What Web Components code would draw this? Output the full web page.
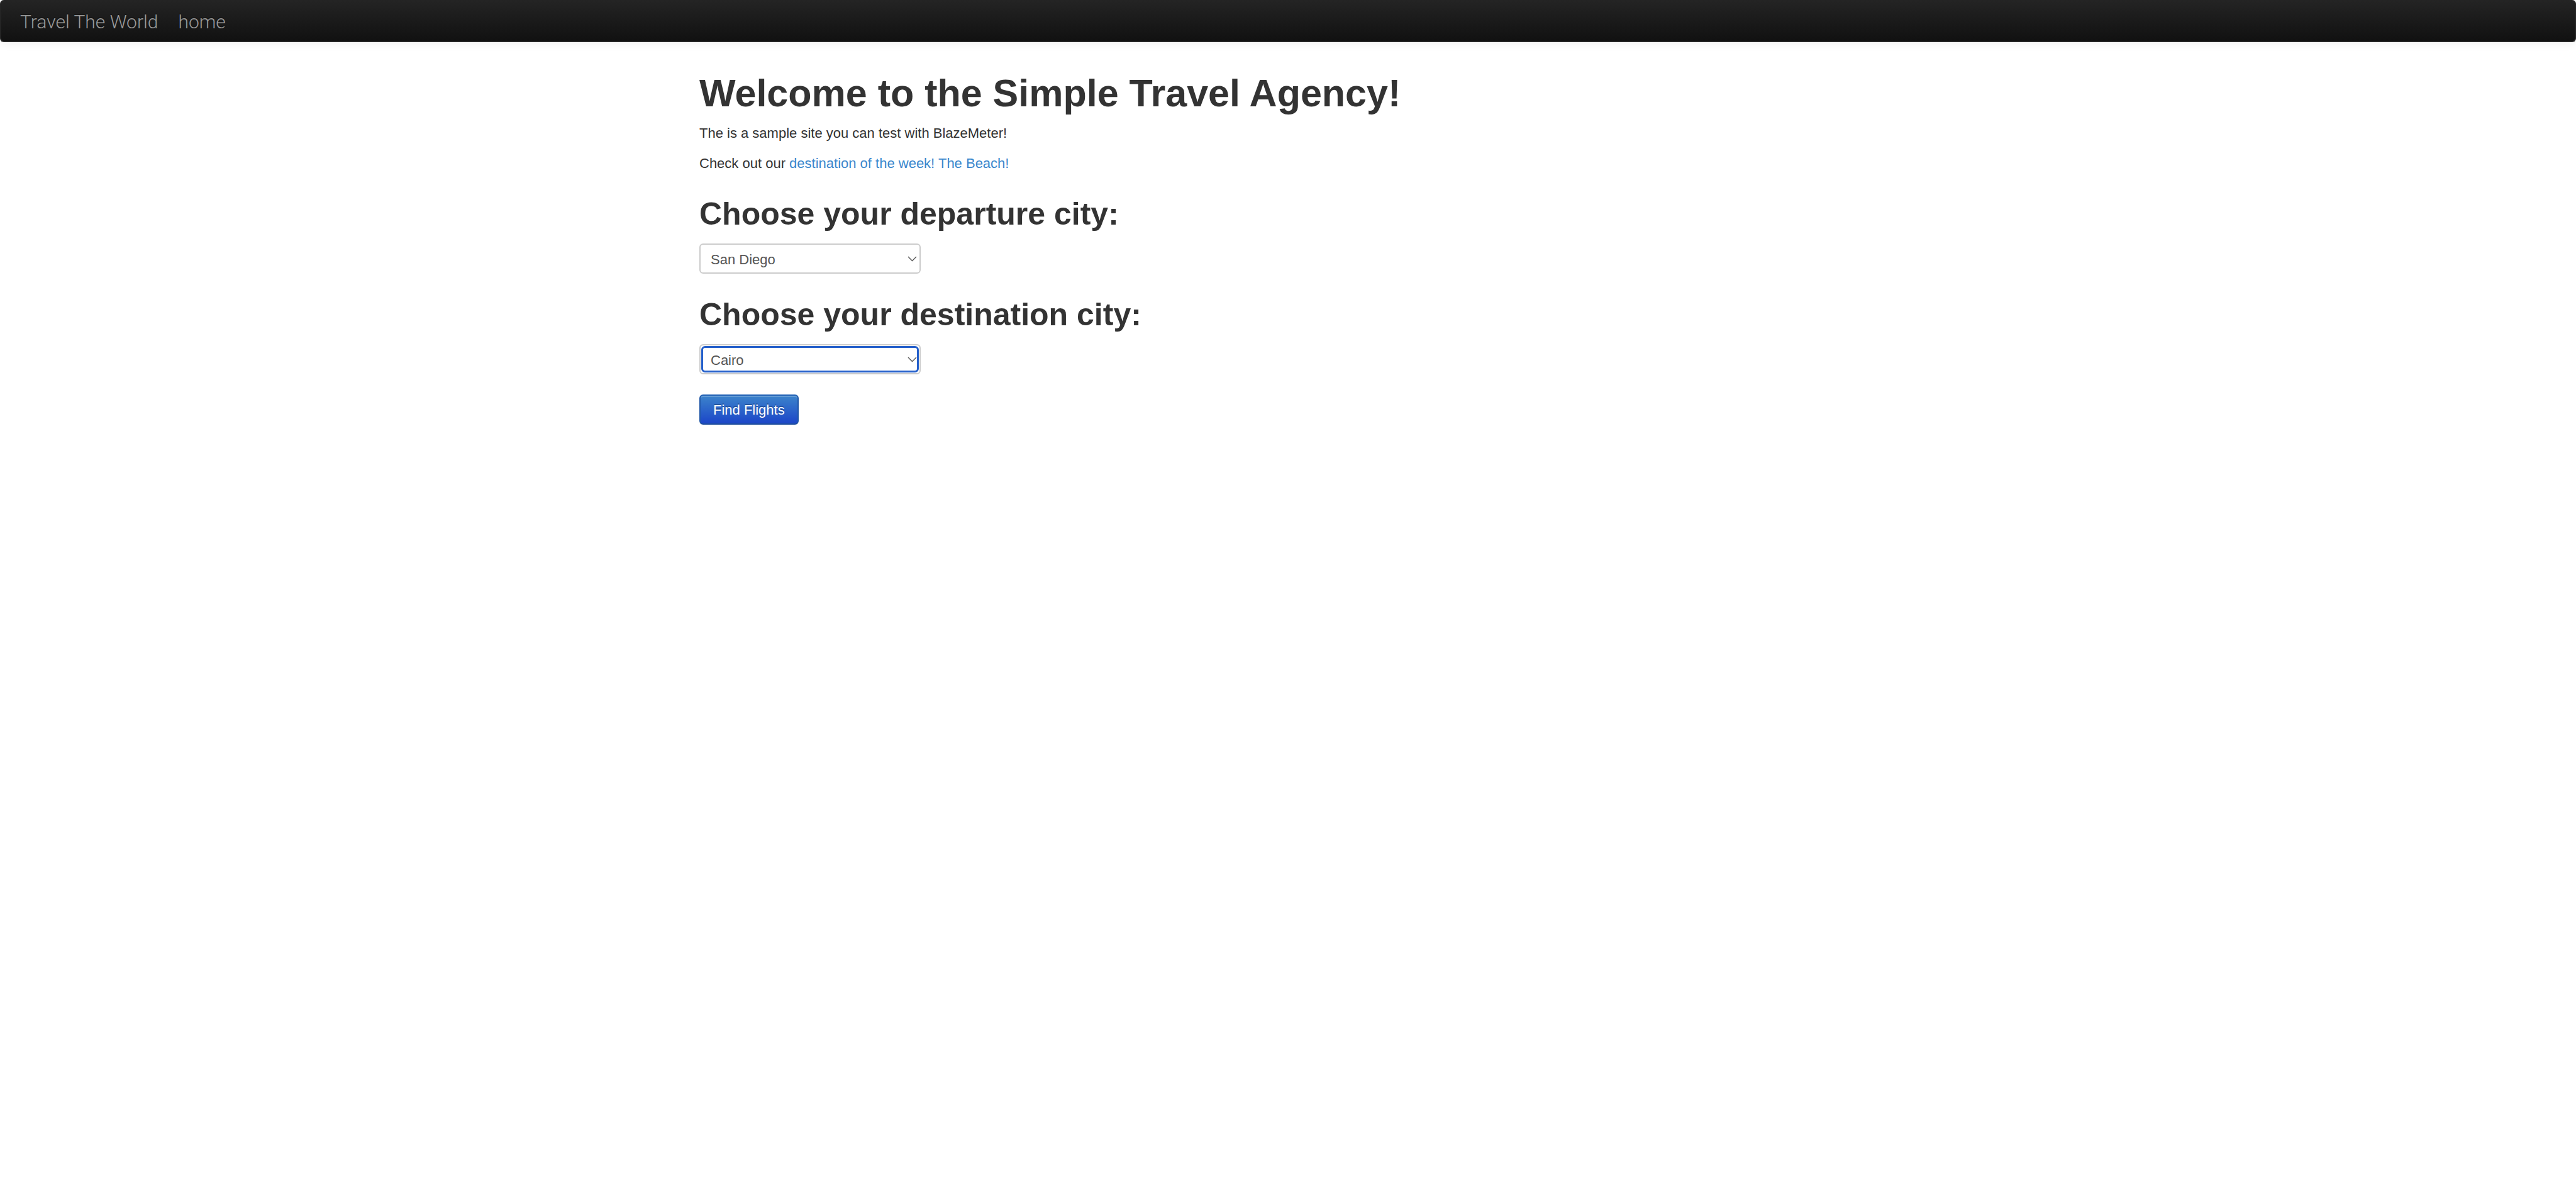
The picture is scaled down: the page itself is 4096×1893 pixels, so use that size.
<!DOCTYPE html>
<html lang="en">
<head>
<meta charset="utf-8">
<title>Travel The World</title>
<style>
  body { margin: 0; background: #fff; color: #333; font: 22px/32px "Liberation Sans", Arial, sans-serif; }
</style>
</head>
<body>
<travel-navbar>
  <nav-link href="#">Travel The World</nav-link>
  <nav-link href="#">home</nav-link>
</travel-navbar>
<travel-page></travel-page>

<template id="navbar-template">
  <style>
    :host { display: block; }
    nav {
      display: flex; box-sizing: border-box; height: 67px; padding: 0 14px;
      border: 2px solid #252525; border-top-width: 0; border-radius: 6px;
      background: linear-gradient(#242424, #111);
      box-shadow: 0 2px 16px rgba(0, 0, 0, .065);
    }
  </style>
  <nav aria-label="Main"><slot></slot></nav>
</template>

<template id="nav-link-template">
  <style>
    :host { display: flex; }
    a {
      display: flex; align-items: center; padding: 4px 16px 0; color: #999; text-decoration: none;
      font: 300 30px/32px Roboto, "Liberation Sans", sans-serif;
      text-shadow: 0 -2px 0 rgba(0, 0, 0, .25);
    }
  </style>
  <a><slot></slot></a>
</template>

<template id="city-select-template">
  <style>
    :host { display: block; }
    h2 { margin: 0 0 14px; font-size: 50px; line-height: 66px; }
    .field { display: grid; width: 352px; align-items: center; }
    select, svg, .ring { grid-area: 1 / 1; }
    select {
      appearance: none; box-sizing: border-box; width: 100%; height: 48px; margin: 0; padding: 4px 32px 0 16px;
      border: 2px solid #ccc; border-radius: 6px; background: #fff; color: #555; font: inherit; outline: none;
    }
    .ring { display: none; align-self: stretch; margin: 3px; border: 3px solid #2560cb; border-radius: 6px; pointer-events: none; }
    :host([active]) .ring { display: block; }
    svg { justify-self: end; width: 15px; height: 9px; margin-right: 6px; pointer-events: none; }
  </style>
  <h2><label for="city"><slot name="label"></slot></label></h2>
  <div class="field">
    <select id="city"></select>
    <div class="ring"></div>
    <svg viewBox="0 0 15 9" fill="none" stroke="#555" stroke-width="1.4"><path d="M1 1l6.5 6.5L14 1"/></svg>
  </div>
</template>

<template id="primary-button-template">
  <style>
    :host { display: block; }
    button {
      box-sizing: border-box; height: 48px; margin: 0; padding: 2px 20px 0; border: 2px solid;
      border-color: #2262b4 #2158a8 #1f4f9c; border-radius: 6px; color: #fff; font: inherit;
      background: linear-gradient(#3d86cb, #1a43c8) border-box;
      text-shadow: 0 -2px 0 rgba(0, 0, 0, .25);
      box-shadow: inset 0 2px 0 rgba(255, 255, 255, .2), 0 2px 3px rgba(0, 0, 0, .05);
    }
  </style>
  <button type="submit"><slot></slot></button>
</template>

<template id="page-template">
  <style>
    :host { display: block; }
    main { box-sizing: border-box; width: 100%; max-width: 1872px; margin: 0 auto; padding-top: 48px; }
    h1 { margin: 0 0 15px; font-size: 61px; line-height: 66px; }
    p { margin: 0 0 16px; }
    a { color: #3a87cd; text-decoration: none; }
    form { display: flex; flex-direction: column; gap: 32px; align-items: flex-start; margin-top: 31px; }
  </style>
  <main>
    <h1>Welcome to the Simple Travel Agency!</h1>
    <p>The is a sample site you can test with BlazeMeter!</p>
    <p>Check out our <a href="#">destination of the week! The Beach!</a></p>
    <form>
      <city-select city="San Diego"><span slot="label">Choose your departure city:</span></city-select>
      <city-select city="Cairo" active><span slot="label">Choose your destination city:</span></city-select>
      <primary-button>Find Flights</primary-button>
    </form>
  </main>
</template>

<script>
  class TemplateElement extends HTMLElement {
    constructor() {
      super();
      this.attachShadow({ mode: "open" })
        .append(document.getElementById(this.constructor.template).content.cloneNode(true));
    }
  }
  customElements.define("travel-navbar", class extends TemplateElement {
    static template = "navbar-template";
  });
  customElements.define("nav-link", class extends TemplateElement {
    static template = "nav-link-template";
    connectedCallback() { this.shadowRoot.querySelector("a").href = this.getAttribute("href"); }
  });
  customElements.define("city-select", class extends TemplateElement {
    static template = "city-select-template";
    connectedCallback() {
      const city = this.getAttribute("city");
      this.shadowRoot.querySelector("select").replaceChildren(new Option(city, city));
    }
  });
  customElements.define("primary-button", class extends TemplateElement {
    static template = "primary-button-template";
  });
  customElements.define("travel-page", class extends TemplateElement {
    static template = "page-template";
  });
</script>
</body>
</html>
